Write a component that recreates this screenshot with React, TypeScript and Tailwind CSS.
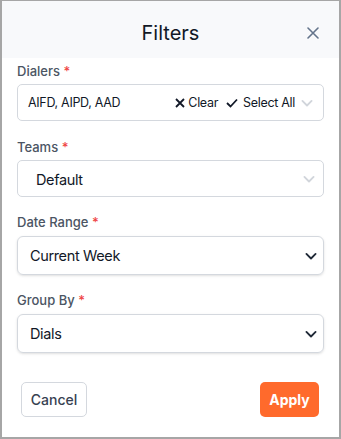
import React from "react";

const Chevron = ({ className }: { className: string }) => (
  <svg width="20" height="20" viewBox="0 0 24 24" fill="none" className={className} stroke="currentColor" strokeWidth="2.2" strokeLinecap="round" strokeLinejoin="round">
    <path d="M6.5 9.5l5.5 5.5 5.5-5.5" />
  </svg>
);

const Label = ({ text }: { text: string }) => (
  <div className="text-[13px] font-medium leading-[18px] text-[#4b5563]">
    {text} <span className="text-[#ef4444]">*</span>
  </div>
);

export default function App() {
  return (
    <div
      className="w-[341px] h-[439px] bg-white border-x-2 border-b-2 border-t border-[#a6a6a6] flex flex-col"
      style={{ fontFamily: "Inter, 'Noto Sans', sans-serif" }}
    >
      <div className="h-[57px] bg-[#f8f9fb] flex items-center justify-center relative shrink-0">
        <span className="text-[20px] text-[#111827] mt-[6px]">Filters</span>
        <svg className="absolute right-[20px] top-[26px]" width="12" height="12" viewBox="0 0 12 12" stroke="#64748b" strokeWidth="1.6" strokeLinecap="round">
          <path d="M1 1l10 10M11 1L1 11" />
        </svg>
      </div>
      <div className="px-[15px] pt-[4px] flex flex-col">
        <Label text="Dialers" />
        <div className="mt-[4px] h-[37px] border border-[#d4d8de] rounded-[5px] flex items-center pl-[10px] pr-[6px] text-[12.5px] tracking-tight text-[#111827]">
          <span className="flex-1 mt-[1px]">AIFD, AIPD, AAD</span>
          <span className="flex items-center gap-[3px] mr-[8px] mt-[1px]">
            <svg width="10" height="10" viewBox="0 0 10 10" stroke="#111827" strokeWidth="1.8">
              <path d="M1 1l8 8M9 1L1 9" />
            </svg>
            Clear
          </span>
          <span className="flex items-center gap-[5px] mt-[1px]">
            <svg width="12" height="10" viewBox="0 0 12 10" fill="none" stroke="#111827" strokeWidth="1.8">
              <path d="M1 5l3.5 3.5L11 1.5" />
            </svg>
            Select All
          </span>
          <Chevron className="ml-[2px] text-[#d1d5db]" />
        </div>

        <div className="mt-[17px]">
          <Label text="Teams" />
        </div>
        <div className="mt-[4px] h-[37px] border border-[#d4d8de] rounded-[5px] flex items-center pl-[18px] pr-[4px] text-[14.5px] tracking-tight text-[#111827]">
          <span className="flex-1 mt-[2px]">Default</span>
          <Chevron className="text-[#d1d5db]" />
        </div>

        <div className="mt-[16px]">
          <Label text="Date Range" />
        </div>
        <div className="mt-[5px] h-[39px] border border-[#d4d8de] rounded-[6px] shadow-sm flex items-center pl-[12px] pr-[2px] text-[14.5px] tracking-tight text-[#111827] w-[307px]">
          <span className="flex-1 mt-[1px]">Current Week</span>
          <Chevron className="text-[#1f2937]" />
        </div>

        <div className="mt-[16px]">
          <Label text="Group By" />
        </div>
        <div className="mt-[5px] h-[39px] border border-[#d4d8de] rounded-[6px] shadow-sm flex items-center pl-[12px] pr-[2px] text-[14.5px] tracking-tight text-[#111827] w-[307px]">
          <span className="flex-1 mt-[1px]">Dials</span>
          <Chevron className="text-[#1f2937]" />
        </div>

        <div className="mt-[29px] flex justify-between px-[4px]">
          <button className="h-[35px] w-[66px] border border-[#d4d8de] rounded-[5px] text-[14px] font-medium text-[#374151] bg-white">
            Cancel
          </button>
          <button className="h-[35px] w-[59px] rounded-[5px] text-[14px] font-bold text-white bg-[#ff6a2c] mr-[1px]">
            Apply
          </button>
        </div>
      </div>
    </div>
  );
}
